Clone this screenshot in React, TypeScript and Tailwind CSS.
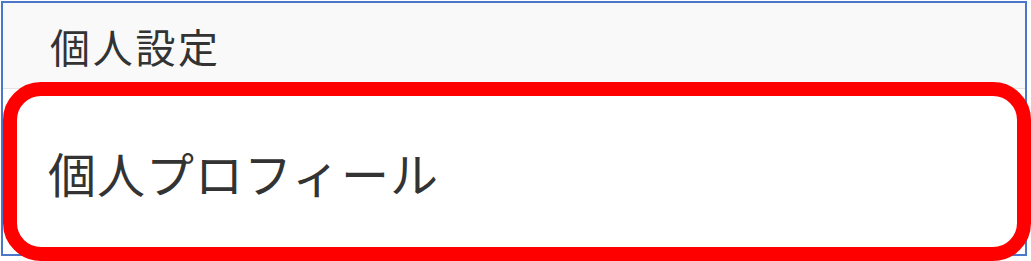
export default function App() {
  return (
    <div
      className="relative h-[261px] w-[1031px] overflow-hidden bg-white text-[#333333]"
      style={{ fontFamily: '"Noto Sans CJK JP", "Noto Sans", sans-serif' }}
    >
      <div className="ml-[1px] mt-[1px] flex h-[255px] w-[1026px] flex-col border-2 border-[#4a77c9]">
        <div className="flex h-[86px] items-center border-b border-[#e3e3e3] bg-[#f9f9f9] pl-[47px]">
          <span className="text-[40px] leading-none tracking-[2.7px]">個人設定</span>
        </div>
        <div className="flex flex-1 items-center bg-white pl-[45px] pt-[1px]">
          <span className="text-[48px] leading-none tracking-[1px]">個人プロフィール</span>
        </div>
      </div>

      {/* highlight annotation */}
      <div className="pointer-events-none absolute left-[3px] top-[82px] h-[179px] w-[1028px] rounded-[38px] border-[14px] border-[#ff0000]" />
    </div>
  )
}
